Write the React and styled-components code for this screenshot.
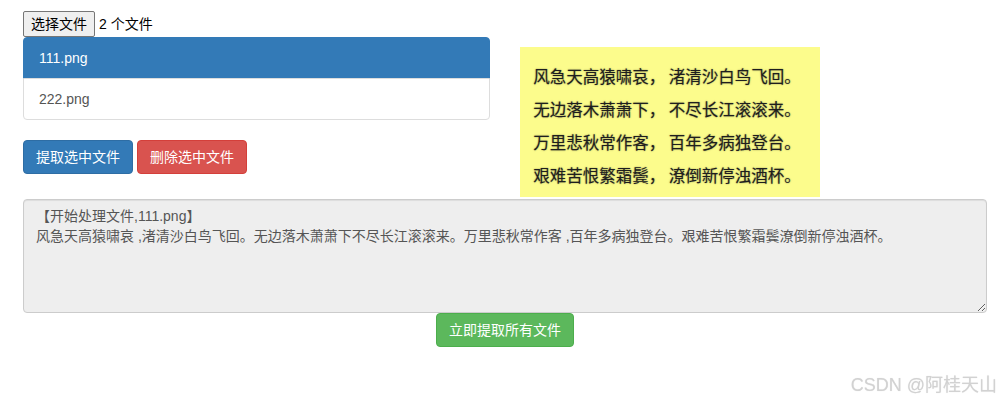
import React from "react";
import styled, { createGlobalStyle } from "styled-components";

const FONT = `"Liberation Sans", "Noto Sans CJK SC", sans-serif`;

const Global = createGlobalStyle`
  html, body { background: #fff; }
  body {
    margin: 8px;
    font-family: ${FONT};
    font-size: 14px;
    line-height: 20px;
    color: #333;
  }
  * { box-sizing: border-box; }
`;

const Page = styled.div`
  padding: 2px 7px 0 15px;
`;

const TopRow = styled.div`
  display: flex;
  align-items: flex-start;
`;

const LeftCol = styled.div`
  width: 467px;
  flex: none;
`;

const RightCol = styled.div`
  padding: 37px 0 0 30px;
`;

const FileRow = styled.div`
  display: flex;
  align-items: center;
  height: 27px;
  font-size: 14px;
  color: #000;
`;

const FileButton = styled.span`
  display: inline-flex;
  align-items: center;
  height: 26px;
  padding: 0 7px;
  margin-right: 4px;
  border: 1px solid #767676;
  border-radius: 2px;
  background: #efefef;
  color: #000;
  font-size: 14px;
`;

const ListGroup = styled.div`
  display: flex;
  flex-direction: column;
  margin-bottom: 20px;
`;

const ListItem = styled.div`
  padding: 10px 15px;
  line-height: 20px;
  border: 1px solid ${(p) => (p.$active ? "#337ab7" : "#ddd")};
  background: ${(p) => (p.$active ? "#337ab7" : "#fff")};
  color: ${(p) => (p.$active ? "#fff" : "#555")};
  &:first-child { border-radius: 4px 4px 0 0; }
  &:last-child { border-radius: 0 0 4px 4px; }
  & + & { margin-top: -1px; }
`;

const ButtonRow = styled.div`
  display: flex;
  gap: 4px;
`;

const variants = {
  primary: ["#337ab7", "#2e6da4"],
  danger: ["#d9534f", "#d43f3a"],
  success: ["#5cb85c", "#4cae4c"],
};

const Btn = styled.button`
  font-family: ${FONT};
  font-size: 14px;
  line-height: 20px;
  padding: 6px 12px;
  border-radius: 4px;
  border: 1px solid ${(p) => variants[p.$kind][1]};
  background: ${(p) => variants[p.$kind][0]};
  color: #fff;
  cursor: pointer;
  white-space: nowrap;
`;

const PoemImage = styled.div`
  width: 300px;
  height: 150px;
  background: #fcfc8c;
  padding-top: 13px;
  display: flex;
  flex-direction: column;
  align-items: center;
`;

const PoemLine = styled.div`
  font-family: "Noto Sans CJK SC", sans-serif;
  font-size: 16.5px;
  line-height: 33px;
  font-weight: 400;
  color: #1e1e1e;
  text-shadow: 0 0 1.5px rgba(0, 0, 0, 0.55);
  white-space: pre;
  margin-left: -6px;
`;

const Output = styled.textarea`
  display: block;
  width: 100%;
  height: 114px;
  margin: 2px 0 0;
  padding: 6px 12px;
  font-family: ${FONT};
  font-size: 14px;
  line-height: 20px;
  color: #555;
  background: #eee;
  border: 1px solid #ccc;
  border-radius: 4px;
  box-shadow: inset 0 1px 1px rgba(0, 0, 0, 0.075);
  resize: both;
  outline: none;
`;

const Center = styled.div`
  display: flex;
  justify-content: center;
`;

const Watermark = styled.div`
  position: fixed;
  right: 5px;
  top: 373px;
  font-family: ${FONT};
  font-size: 18px;
  line-height: 24px;
  color: #d2d2d2;
  text-shadow: 0 0 1px rgba(0, 0, 0, 0.12);
  pointer-events: none;
`;

const poem = [
  "风急天高猿啸哀， 渚清沙白鸟飞回。",
  "无边落木萧萧下， 不尽长江滚滚来。",
  "万里悲秋常作客， 百年多病独登台。",
  "艰难苦恨繁霜鬓， 潦倒新停浊酒杯。",
];

const outputText =
  "【开始处理文件,111.png】\n风急天高猿啸哀 ,渚清沙白鸟飞回。无边落木萧萧下不尽长江滚滚来。万里悲秋常作客 ,百年多病独登台。艰难苦恨繁霜鬓潦倒新停浊酒杯。";

export default function App() {
  return (
    <>
      <Global />
      <Page>
        <TopRow>
          <LeftCol>
            <FileRow>
              <FileButton>选择文件</FileButton>
              2 个文件
            </FileRow>
            <ListGroup>
              <ListItem $active>111.png</ListItem>
              <ListItem>222.png</ListItem>
            </ListGroup>
            <ButtonRow>
              <Btn $kind="primary">提取选中文件</Btn>
              <Btn $kind="danger">删除选中文件</Btn>
            </ButtonRow>
          </LeftCol>
          <RightCol>
            <PoemImage>
              {poem.map((l) => (
                <PoemLine key={l}>{l}</PoemLine>
              ))}
            </PoemImage>
          </RightCol>
        </TopRow>
        <Output readOnly value={outputText} />
        <Center>
          <Btn $kind="success">立即提取所有文件</Btn>
        </Center>
      </Page>
      <Watermark>CSDN @阿桂天山</Watermark>
    </>
  );
}
